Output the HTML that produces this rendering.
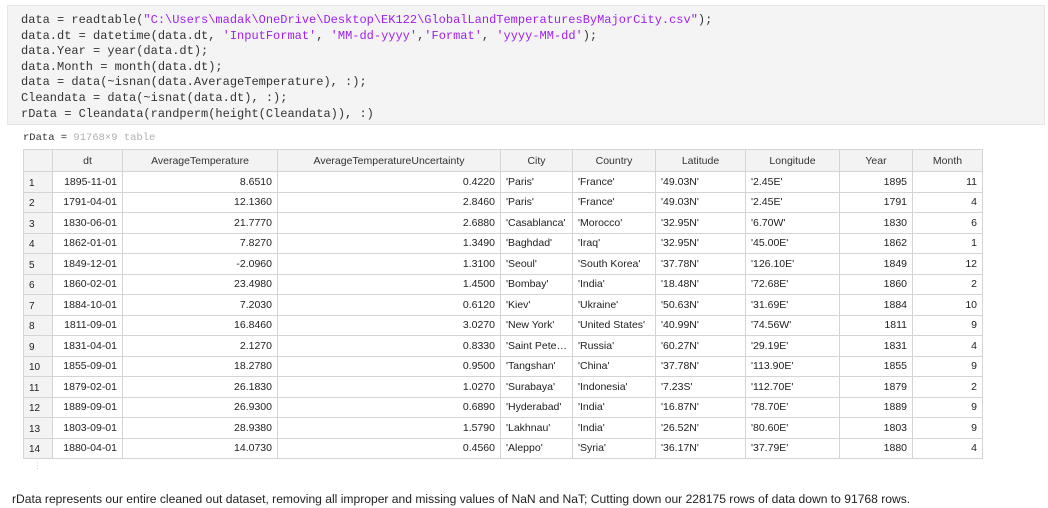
<!DOCTYPE html>
<html><head><style>
body{margin:0;width:1048px;height:508px;background:#fff;position:relative;overflow:hidden;font-family:"Liberation Sans",sans-serif;}
.code{position:absolute;left:7px;top:5px;width:1036px;height:118px;background:#f4f4f4;border:1px solid #e6e6e6;}
.code pre{margin:0;position:absolute;left:13px;top:7px;font-family:"Liberation Mono",monospace;font-size:12px;line-height:15.6px;color:#333;}
.s{color:#a020f0}
.lbl{position:absolute;left:23px;top:132px;font-family:"Liberation Mono",monospace;font-size:10.5px;color:#333}
.lbl span{color:#b0b0b0}
table{position:absolute;left:23px;top:149px;border-collapse:collapse;font-size:10.5px;color:#222}
td,th{border:1px solid #d4d4d4;padding:0 5px;height:19.5px;white-space:nowrap}
th{background:#f3f3f3;font-weight:normal;height:21px;color:#333}
td.n{text-align:right}
td.i{background:#f3f3f3;text-align:left;font-size:10px;padding-top:3px;height:16.5px}
.foot{position:absolute;left:12px;top:492px;font-size:12.1px;color:#222}
.dots{position:absolute;left:36px;top:461px;font-size:8px;color:#bbb;line-height:3px}
</style></head><body>
<div class="code"><pre>data = readtable(<span class="s">"C:\Users\madak\OneDrive\Desktop\EK122\GlobalLandTemperaturesByMajorCity.csv"</span>);
data.dt = datetime(data.dt, <span class="s">'InputFormat'</span>, <span class="s">'MM-dd-yyyy'</span>,<span class="s">'Format'</span>, <span class="s">'yyyy-MM-dd'</span>);
data.Year = year(data.dt);
data.Month = month(data.dt);
data = data(~isnan(data.AverageTemperature), :);
Cleandata = data(~isnat(data.dt), :);
rData = Cleandata(randperm(height(Cleandata)), :)</pre></div>
<div class="lbl">rData = <span>91768×9 table</span></div>
<table>
<colgroup><col style="width:29px"><col style="width:70px"><col style="width:155px"><col style="width:223px"><col style="width:72px"><col style="width:83px"><col style="width:90px"><col style="width:94px"><col style="width:73px"><col style="width:70px"></colgroup>
<tr><th></th><th>dt</th><th>AverageTemperature</th><th>AverageTemperatureUncertainty</th><th>City</th><th>Country</th><th>Latitude</th><th>Longitude</th><th>Year</th><th>Month</th></tr>
<tr><td class="i">1</td><td class="n">1895-11-01</td><td class="n">8.6510</td><td class="n">0.4220</td><td>'Paris'</td><td>'France'</td><td>'49.03N'</td><td>'2.45E'</td><td class="n">1895</td><td class="n">11</td></tr>
<tr><td class="i">2</td><td class="n">1791-04-01</td><td class="n">12.1360</td><td class="n">2.8460</td><td>'Paris'</td><td>'France'</td><td>'49.03N'</td><td>'2.45E'</td><td class="n">1791</td><td class="n">4</td></tr>
<tr><td class="i">3</td><td class="n">1830-06-01</td><td class="n">21.7770</td><td class="n">2.6880</td><td>'Casablanca'</td><td>'Morocco'</td><td>'32.95N'</td><td>'6.70W'</td><td class="n">1830</td><td class="n">6</td></tr>
<tr><td class="i">4</td><td class="n">1862-01-01</td><td class="n">7.8270</td><td class="n">1.3490</td><td>'Baghdad'</td><td>'Iraq'</td><td>'32.95N'</td><td>'45.00E'</td><td class="n">1862</td><td class="n">1</td></tr>
<tr><td class="i">5</td><td class="n">1849-12-01</td><td class="n">-2.0960</td><td class="n">1.3100</td><td>'Seoul'</td><td>'South Korea'</td><td>'37.78N'</td><td>'126.10E'</td><td class="n">1849</td><td class="n">12</td></tr>
<tr><td class="i">6</td><td class="n">1860-02-01</td><td class="n">23.4980</td><td class="n">1.4500</td><td>'Bombay'</td><td>'India'</td><td>'18.48N'</td><td>'72.68E'</td><td class="n">1860</td><td class="n">2</td></tr>
<tr><td class="i">7</td><td class="n">1884-10-01</td><td class="n">7.2030</td><td class="n">0.6120</td><td>'Kiev'</td><td>'Ukraine'</td><td>'50.63N'</td><td>'31.69E'</td><td class="n">1884</td><td class="n">10</td></tr>
<tr><td class="i">8</td><td class="n">1811-09-01</td><td class="n">16.8460</td><td class="n">3.0270</td><td>'New York'</td><td>'United States'</td><td>'40.99N'</td><td>'74.56W'</td><td class="n">1811</td><td class="n">9</td></tr>
<tr><td class="i">9</td><td class="n">1831-04-01</td><td class="n">2.1270</td><td class="n">0.8330</td><td>'Saint Pete…</td><td>'Russia'</td><td>'60.27N'</td><td>'29.19E'</td><td class="n">1831</td><td class="n">4</td></tr>
<tr><td class="i">10</td><td class="n">1855-09-01</td><td class="n">18.2780</td><td class="n">0.9500</td><td>'Tangshan'</td><td>'China'</td><td>'37.78N'</td><td>'113.90E'</td><td class="n">1855</td><td class="n">9</td></tr>
<tr><td class="i">11</td><td class="n">1879-02-01</td><td class="n">26.1830</td><td class="n">1.0270</td><td>'Surabaya'</td><td>'Indonesia'</td><td>'7.23S'</td><td>'112.70E'</td><td class="n">1879</td><td class="n">2</td></tr>
<tr><td class="i">12</td><td class="n">1889-09-01</td><td class="n">26.9300</td><td class="n">0.6890</td><td>'Hyderabad'</td><td>'India'</td><td>'16.87N'</td><td>'78.70E'</td><td class="n">1889</td><td class="n">9</td></tr>
<tr><td class="i">13</td><td class="n">1803-09-01</td><td class="n">28.9380</td><td class="n">1.5790</td><td>'Lakhnau'</td><td>'India'</td><td>'26.52N'</td><td>'80.60E'</td><td class="n">1803</td><td class="n">9</td></tr>
<tr><td class="i">14</td><td class="n">1880-04-01</td><td class="n">14.0730</td><td class="n">0.4560</td><td>'Aleppo'</td><td>'Syria'</td><td>'36.17N'</td><td>'37.79E'</td><td class="n">1880</td><td class="n">4</td></tr>
</table>
<div class="dots">·<br>·<br>·</div>
<div class="foot">rData represents our entire cleaned out dataset, removing all improper and missing values of NaN and NaT; Cutting down our 228175 rows of data down to 91768 rows.</div>
</body></html>
